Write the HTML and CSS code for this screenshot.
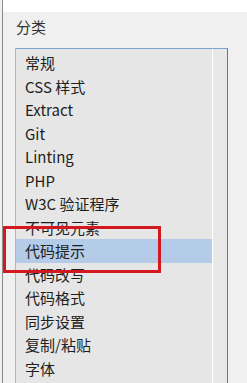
FILE: index.html
```html
<!DOCTYPE html>
<html lang="zh-CN">
<head>
<meta charset="utf-8">
<link rel="stylesheet" href="styles.css">
</head>
<body>
<div class="frame">
  <div class="topbar"></div>
  <div class="panel">
    <div class="label">分类</div>
    <div class="listbox">
      <ul class="items">
        <li class="item">常规</li>
        <li class="item">CSS 样式</li>
        <li class="item">Extract</li>
        <li class="item">Git</li>
        <li class="item">Linting</li>
        <li class="item">PHP</li>
        <li class="item">W3C 验证程序</li>
        <li class="item">不可见元素</li>
        <li class="item selected">代码提示</li>
        <li class="item">代码改写</li>
        <li class="item">代码格式</li>
        <li class="item">同步设置</li>
        <li class="item">复制/粘贴</li>
        <li class="item">字体</li>
      </ul>
      <div class="divider"></div>
      <div class="scrolltrack"></div>
    </div>
  </div>
  <div class="annotation"></div>
</div>
</body>
</html>
```
FILE: styles.css
```css
html, body {
  margin: 0;
  padding: 0;
  background: #f0f0f0;
  overflow: hidden;
  height: 383px;
}
body {
  padding-left: 2px;
  font-family: "Noto Sans CJK SC", "Noto Sans", sans-serif;
  color: #1e1e1e;
}
.frame {
  position: relative;
  border-left: 1px solid #8c8c8c;
  height: 383px;
  box-sizing: border-box;
}
.topbar {
  height: 12px;
  background: #ffffff;
}
.panel {
  padding-left: 12px;
}
.label {
  margin-top: 5px;
  font-size: 15px;
  line-height: 20px;
  height: 20px;
  color: #333;
  padding-left: 1px;
}
.listbox {
  margin-top: 11px;
  width: 213px;
  height: 340px;
  box-sizing: border-box;
  display: flex;
  border: 1px solid #9fb9dd;
  border-right-color: #3f7fc4;
  border-top-color: #7fa3d3;
  background: #e6e6e6;
}
.items {
  list-style: none;
  margin: 0;
  padding: 2px 0 0 0;
  width: 196px;
}
.item {
  height: 23.5px;
  line-height: 23.5px;
  font-size: 15px;
  padding-left: 9px;
  white-space: nowrap;
}
.item.selected {
  background: #b5cce8;
}
.divider {
  width: 1px;
  background: #ffffff;
}
.scrolltrack {
  width: 14px;
  background: #e8e8e8;
}
.annotation {
  position: absolute;
  left: 0px;
  top: 226px;
  width: 158px;
  height: 47px;
  box-sizing: border-box;
  border: 3px solid #d3181f;
}
```
